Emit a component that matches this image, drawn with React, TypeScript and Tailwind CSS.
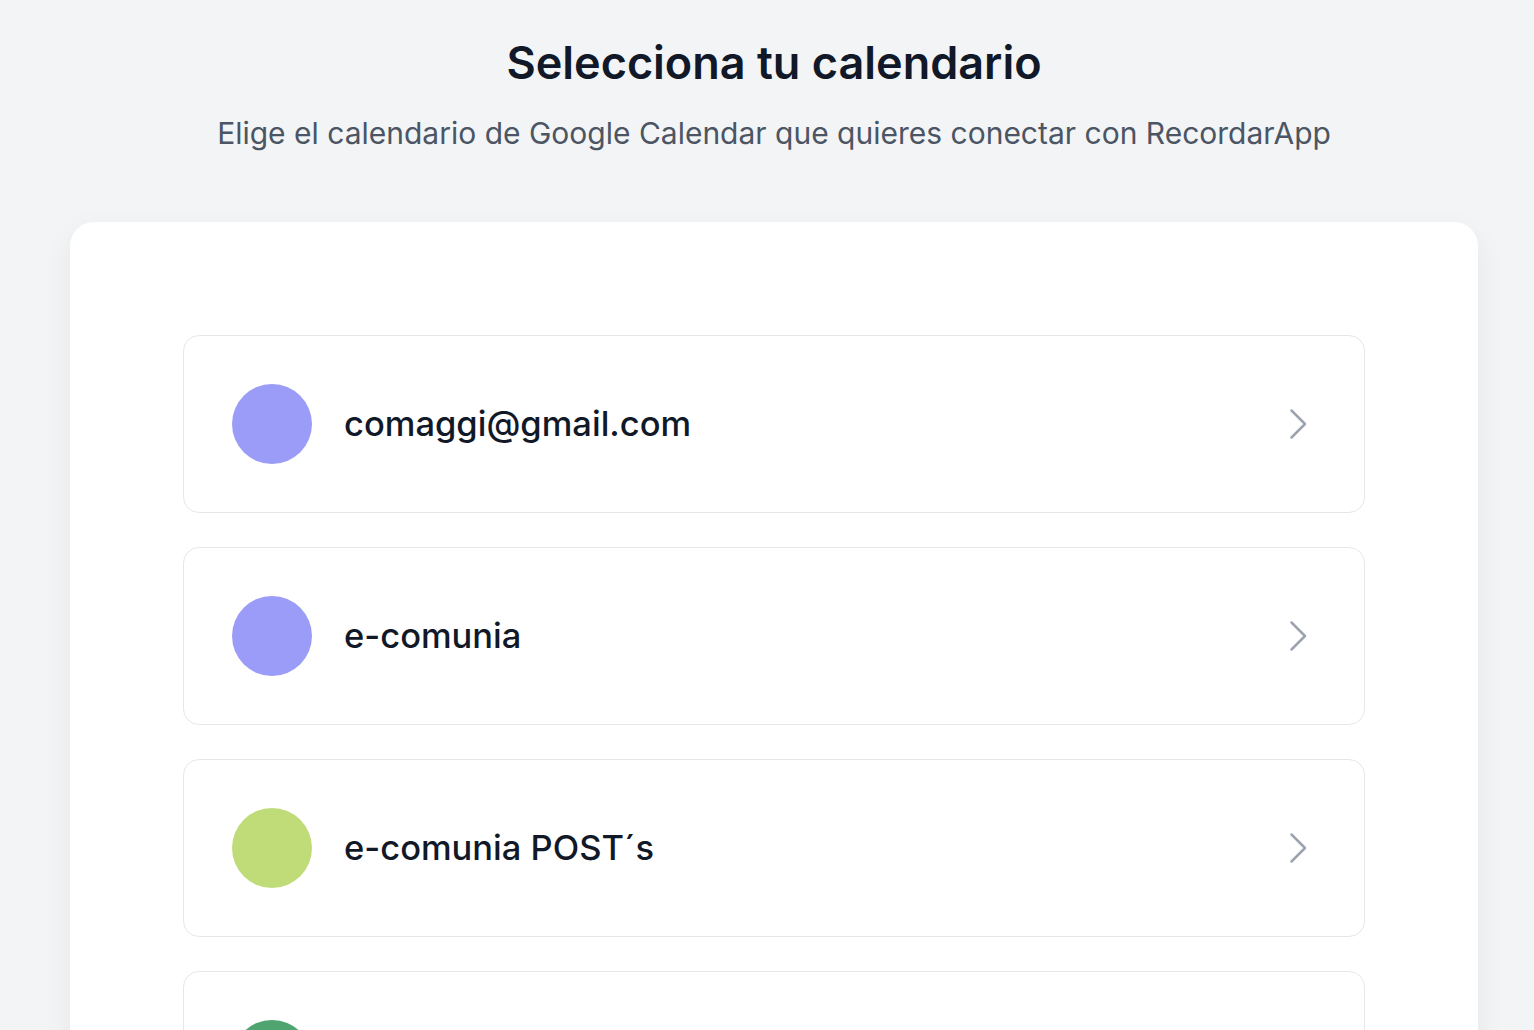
import React from "react";

const items = [
  { name: "comaggi@gmail.com", color: "bg-[#9a9cf8]" },
  { name: "e-comunia", color: "bg-[#9a9cf8]" },
  { name: "e-comunia POST´s", color: "bg-[#bfdc78]" },
  { name: "Festivos en España", color: "bg-[#4fa46f]" },
];

function Chevron() {
  return (
    <svg width="20" height="32" viewBox="0 0 20 32" fill="none" stroke="#9ca3af" strokeWidth="2.5" strokeLinecap="round" strokeLinejoin="round">
      <path d="M3.5 2.5L17 16L3.5 29.5" />
    </svg>
  );
}

export default function App() {
  return (
    <div className="h-[1030px] overflow-hidden bg-[#f3f4f6] font-['Inter','Noto_Sans',sans-serif] text-[#111827]">
      <div className="flex flex-col items-center pt-[33px] pl-[14px]">
        <h1 className="text-[45px] font-semibold leading-[60px]">Selecciona tu calendario</h1>
        <p className="mt-[20px] text-[30px] leading-[40px] text-[#4b5563]">
          Elige el calendario de Google Calendar que quieres conectar con RecordarApp
        </p>
      </div>
      <div className="ml-[70px] mr-[56px] mt-[69px] rounded-[24px] bg-white px-[113px] pt-[113px] pb-[60px] shadow-[0_10px_30px_rgba(0,0,0,0.06)]">
        <div className="flex flex-col gap-[34px]">
          {items.map((it) => (
            <div
              key={it.name}
              className="flex h-[178px] items-center rounded-[16px] border-[1.5px] border-[#e5e7eb] bg-white pl-[48px] pr-[56px]"
            >
              <div className={`h-[80px] w-[80px] shrink-0 rounded-full ${it.color}`} />
              <span className="ml-[32px] flex-1 text-[34.5px] font-medium">{it.name}</span>
              <Chevron />
            </div>
          ))}
        </div>
      </div>
    </div>
  );
}
